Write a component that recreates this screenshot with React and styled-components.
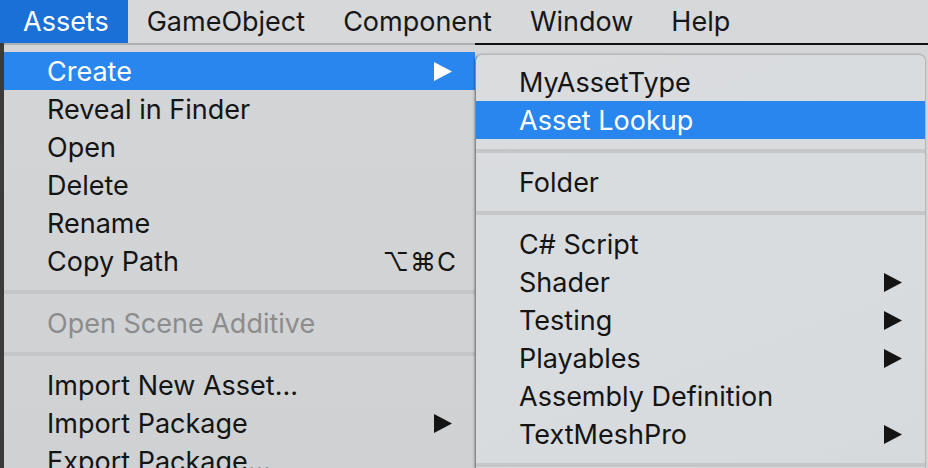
import React from "react";
import styled, { createGlobalStyle } from "styled-components";

const GlobalStyle = createGlobalStyle`
  html, body {
    margin: 0;
    padding: 0;
    width: 928px;
    height: 468px;
    overflow: hidden;
    background: #d4d6d8;
    font-family: Inter, "Liberation Sans", "DejaVu Sans", sans-serif;
  }
`;

const Screen = styled.div`
  width: 928px;
  height: 468px;
  overflow: hidden;
  display: flex;
  flex-direction: column;
`;

const MenuBar = styled.div`
  display: flex;
  height: 43px;
  background: #d6d8da;
`;

const BarItem = styled.div`
  display: flex;
  align-items: center;
  padding: 0 ${(p) => (p.$active ? "19px 0 23px" : "19px")};
  font-size: 27px;
  color: ${(p) => (p.$active ? "#fff" : "#161616")};
  background: ${(p) => (p.$active ? "#1b70d8" : "transparent")};
`;

const Body = styled.div`
  display: flex;
  flex: 1;
  min-height: 0;
`;

const DarkStrip = styled.div`
  width: 4px;
  background: #3b3b3b;
  border-top: 2px solid #3b3b3b;
`;

const MainMenu = styled.div`
  width: 471px;
  padding-top: 7px;
  background: linear-gradient(180deg, #d3d5d7 0%, #cfd1d3 100%);
  border-top: 2px solid #aeb0b2;
`;

const SubArea = styled.div`
  flex: 1;
  padding-top: 9px;
  background: #d3d5d7;
  border-top: 2px solid #111;
`;

const SubMenu = styled.div`
  height: 100%;
  padding-top: 8px;
  box-sizing: border-box;
  background: linear-gradient(160deg, #dadcde 0%, #d8dcdf 60%, #d6dadd 100%);
  border-top: 1px solid #b4b6b8;
  border-left: 1px solid #86888a;
  border-right: 1px solid #b4b6b8;
  border-radius: 7px 7px 0 0;
  margin-right: 2px;
  box-shadow: -1px 0 2px rgba(0, 0, 0, 0.25);
`;

const Row = styled.div`
  display: flex;
  align-items: center;
  height: 38px;
  padding: 0 23px 0 43px;
  font-size: 27px;
  color: ${(p) => (p.$disabled ? "#8c8c8c" : p.$active ? "#fff" : "#141414")};
  background: ${(p) => (p.$active ? "#2a86ef" : "transparent")};
  white-space: nowrap;
`;

const Label = styled.span`
  flex: 1;
`;

const Shortcut = styled.span`
  font-size: 26px;
  letter-spacing: 1px;
  margin-right: -5px;
`;

const Separator = styled.div`
  height: 4px;
  margin: 10px 0;
  background: #c4c6c8;
`;

const Arrow = ({ color }) => (
  <svg width="18" height="19" viewBox="0 0 18 19">
    <polygon points="0,0 18,9.5 0,19" fill={color} />
  </svg>
);

const MenuRow = ({ label, active, disabled, submenu, shortcut }) => (
  <Row $active={active} $disabled={disabled}>
    <Label>{label}</Label>
    {shortcut && <Shortcut>{shortcut}</Shortcut>}
    {submenu && <Arrow color={active ? "#fff" : "#141414"} />}
  </Row>
);

export default function App() {
  return (
    <Screen>
      <GlobalStyle />
      <MenuBar>
        <BarItem $active>Assets</BarItem>
        <BarItem>GameObject</BarItem>
        <BarItem>Component</BarItem>
        <BarItem>Window</BarItem>
        <BarItem>Help</BarItem>
      </MenuBar>
      <Body>
        <DarkStrip />
        <MainMenu>
          <MenuRow label="Create" active submenu />
          <MenuRow label="Reveal in Finder" />
          <MenuRow label="Open" />
          <MenuRow label="Delete" />
          <MenuRow label="Rename" />
          <MenuRow label="Copy Path" shortcut="⌥⌘C" />
          <Separator />
          <MenuRow label="Open Scene Additive" disabled />
          <Separator />
          <MenuRow label="Import New Asset..." />
          <MenuRow label="Import Package" submenu />
          <MenuRow label="Export Package..." />
        </MainMenu>
        <SubArea>
          <SubMenu>
            <MenuRow label="MyAssetType" />
            <MenuRow label="Asset Lookup" active />
            <Separator />
            <MenuRow label="Folder" />
            <Separator />
            <MenuRow label="C# Script" />
            <MenuRow label="Shader" submenu />
            <MenuRow label="Testing" submenu />
            <MenuRow label="Playables" submenu />
            <MenuRow label="Assembly Definition" />
            <MenuRow label="TextMeshPro" submenu />
            <Separator />
          </SubMenu>
        </SubArea>
      </Body>
    </Screen>
  );
}
